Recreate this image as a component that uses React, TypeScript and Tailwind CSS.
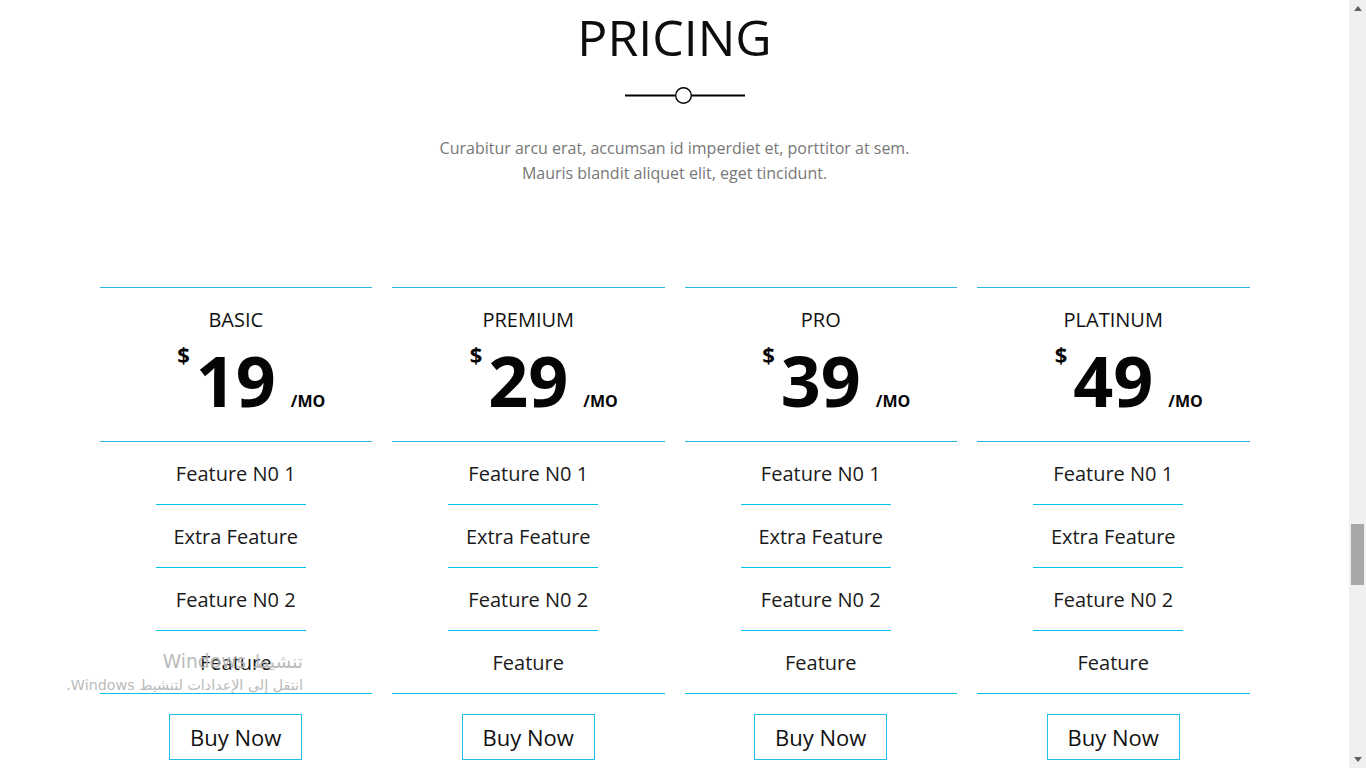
import React from "react";

const plans = [
  { name: "BASIC", price: "19" },
  { name: "PREMIUM", price: "29" },
  { name: "PRO", price: "39" },
  { name: "PLATINUM", price: "49" },
];

const features = ["Feature N0 1", "Extra Feature", "Feature N0 2"];

function Card({ name, price }: { name: string; price: string }) {
  return (
    <div className="px-[10px]">
      <div className="border-t border-[#2bb3e3]">
        <div className="h-[154px] border-b border-[#2bb3e3] pt-[18px] text-center">
          <div className="text-[20px] leading-[28px] text-[#111]">{name}</div>
          <div className="mt-[10px] flex items-baseline justify-center pl-[31px] text-[#050505]">
            <span className="self-start text-[22px] font-bold leading-[20px]">$</span>
            <span className="ml-[6px] text-[70px] font-bold leading-[72px]">{price}</span>
            <span className="ml-[15px] text-[16px] font-bold leading-[24px]">/MO</span>
          </div>
        </div>
        {features.map((f) => (
          <div key={f} className="flex h-[63px] flex-col">
            <div className="flex flex-1 items-center justify-center pt-[2px] text-[20px] text-[#1a1a1a]">{f}</div>
            <div className="ml-[56px] h-px w-[150px] bg-[#00c4ee]" />
          </div>
        ))}
        <div className="flex h-[63px] flex-col">
          <div className="flex flex-1 items-center justify-center pt-[2px] text-[20px] text-[#1a1a1a]">Feature</div>
          <div className="h-px w-full bg-[#00c4ee]" />
        </div>
      </div>
      <div className="mt-[20px] flex justify-center">
        <button className="h-[46px] w-[133px] border border-[#1ec0ea] bg-white text-[22px] text-[#111]">
          Buy Now
        </button>
      </div>
    </div>
  );
}

export default function App() {
  return (
    <div
      className="relative flex h-[768px] w-[1366px] overflow-hidden bg-white"
      style={{ fontFamily: '"Open Sans", "Noto Sans", sans-serif' }}
    >
      <main className="flex-1">
        <div className="pt-[7px] text-center">
          <h1 className="text-[50px] font-normal leading-[60px] text-[#0d0d0d]">PRICING</h1>
          <div className="mt-[20px] flex justify-center pl-[21px]">
            <svg width="120" height="17" viewBox="0 0 120 17">
              <line x1="0" y1="8.5" x2="50" y2="8.5" stroke="#000" strokeWidth="2" />
              <circle cx="58.5" cy="8.5" r="7.8" fill="#fff" stroke="#000" strokeWidth="1.4" />
              <line x1="67" y1="8.5" x2="120" y2="8.5" stroke="#000" strokeWidth="2" />
            </svg>
          </div>
          <p className="mt-[32px] text-[16px] leading-[25px] text-[#777]">
            Curabitur arcu erat, accumsan id imperdiet et, porttitor at sem.
            <br />
            Mauris blandit aliquet elit, eget tincidunt.
          </p>
        </div>
        <div className="mx-auto mt-[101px] grid w-[1170px] grid-cols-4">
          {plans.map((p) => (
            <Card key={p.name} name={p.name} price={p.price} />
          ))}
        </div>
      </main>

      <div className="flex w-[17px] flex-col bg-[#f0f0f0]">
        <div className="flex h-[17px] items-center justify-center">
          <svg width="8" height="5" viewBox="0 0 8 5">
            <polygon points="0,5 4,0 8,5" fill="#606060" />
          </svg>
        </div>
        <div className="h-[507px]" />
        <div className="mx-[2px] h-[61px] bg-[#a8a8a8]" />
        <div className="flex-1" />
        <div className="flex h-[17px] items-center justify-center">
          <svg width="8" height="5" viewBox="0 0 8 5">
            <polygon points="0,0 8,0 4,5" fill="#606060" />
          </svg>
        </div>
      </div>

      <div
        dir="rtl"
        className="pointer-events-none absolute right-[1063px] top-[649px] text-right text-[#b4b4b4] opacity-90"
        style={{ fontFamily: '"DejaVu Sans", "Noto Sans", sans-serif' }}
      >
        <div className="whitespace-nowrap text-[18.7px] leading-[26px]">تنشيط Windows</div>
        <div className="whitespace-nowrap text-[14.3px] leading-[21px]">انتقل إلى الإعدادات لتنشيط Windows.</div>
      </div>
    </div>
  );
}
